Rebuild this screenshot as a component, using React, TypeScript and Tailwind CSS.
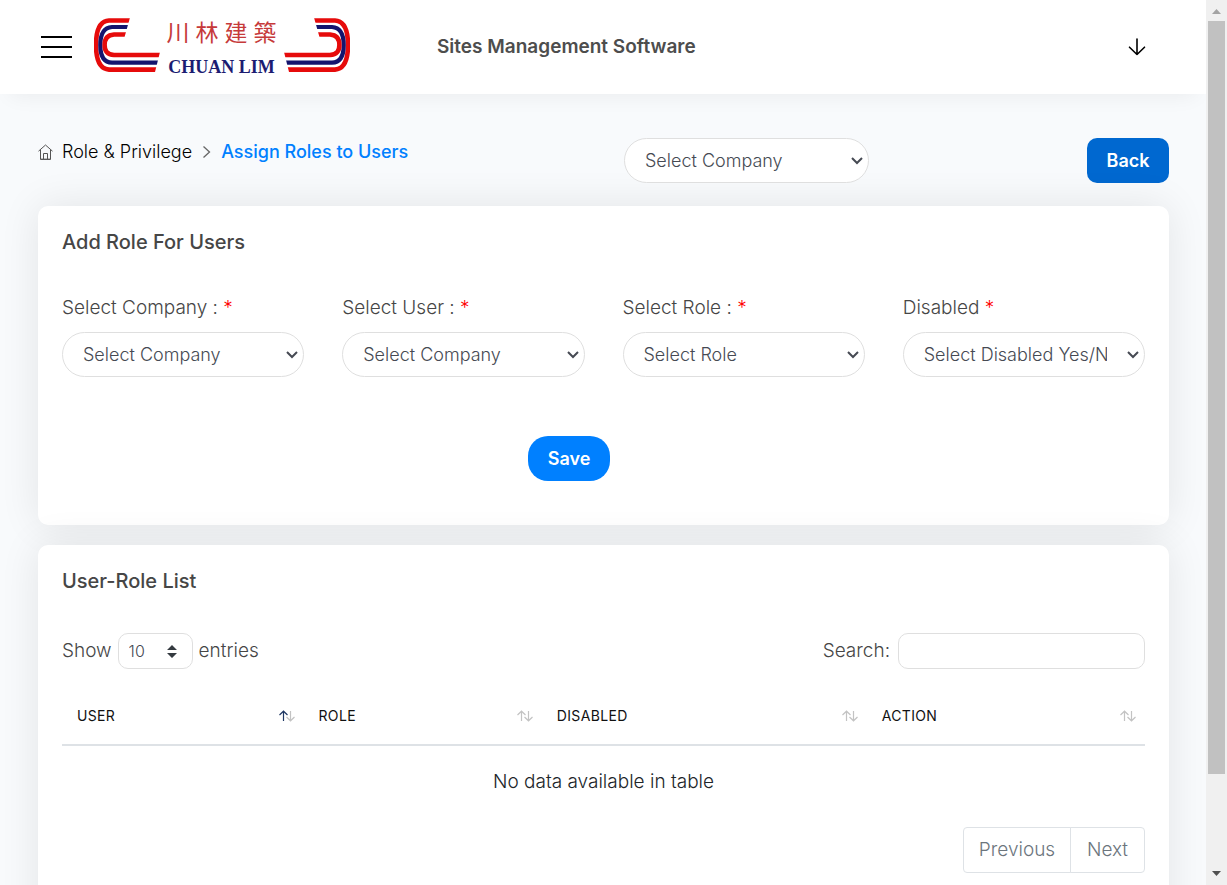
import { useState } from "react";

function LogoMark() {
  return (
    <g fill="none" strokeWidth="4.6">
      <path stroke="#e60b0b" d="M42 6.500H15C6 7 2 16 2 31S6 55 15 55.600H72" />
      <path stroke="#14146e" strokeWidth="4.200" d="M42 13H18C10 13.500 6.300 20 6.300 31S10 48.500 18 48.700H72" />
      <path stroke="#e60b0b" d="M42 20.500H20C13 21 10.600 25 10.600 31S13 40.500 20 41H72" />
    </g>
  );
}

function Logo() {
  return (
    <svg width="256" height="66" viewBox="0 0 256 66" role="img" aria-label="Chuan Lim">
      <defs>
        <clipPath id="ends">
          <path d="M-1 0H37L30 25L27 34H67L60.500 60H-1Z" />
        </clipPath>
      </defs>
      <g clipPath="url(#ends)">
        <LogoMark />
      </g>
      <g transform="translate(256 0) scale(-1 1)">
        <g clipPath="url(#ends)">
          <LogoMark />
        </g>
      </g>
      <g fill="#c63a3a" fontSize="23" fontFamily="'Noto Sans CJK TC', sans-serif" textAnchor="middle">
        <text x="84" y="27">川</text>
        <text x="113" y="27">林</text>
        <text x="142" y="27">建</text>
        <text x="171" y="27">築</text>
      </g>
      <text
        x="127.500"
        y="59"
        fill="#1c1c72"
        fontSize="18"
        fontWeight="700"
        fontFamily="'Liberation Serif', serif"
        textAnchor="middle"
      >
        CHUAN LIM
      </text>
    </svg>
  );
}

function PillSelect({ id, option, label }: { id: string; option: string; label?: string }) {
  return (
    <div className="relative">
      <select
        id={id}
        aria-label={label}
        className="block h-[45px] w-full appearance-none rounded-[23px] border border-[#dfdfdf] bg-white pr-[37px] pl-5 text-lg font-light text-[#464a53]"
      >
        <option>{option}</option>
      </select>
      <svg
        className="pointer-events-none absolute top-[19px] right-[6px]"
        width="12"
        height="8"
        viewBox="0 0 12 8"
        fill="none"
        stroke="#464a53"
        strokeWidth="2"
        aria-hidden="true"
      >
        <path d="M1 1L6 6L11 1" />
      </svg>
    </div>
  );
}

function Field({ id, label, option }: { id: string; label: string; option: string }) {
  return (
    <div className="min-w-0">
      <label htmlFor={id} className="block h-9 text-[19px] leading-6 font-light text-[#464646]">
        {label} <span className="text-[#ff0000]">*</span>
      </label>
      <PillSelect id={id} option={option} />
    </div>
  );
}

function SortIcon({ active }: { active?: boolean }) {
  return (
    <svg width="16" height="12" viewBox="0 0 16 12" fill="none" strokeWidth="1.200" aria-hidden="true">
      <path stroke="#c3c3c3" d="M11.500 1V10.500M7.500 7L11.500 10.800L15.500 7" />
      <path stroke={active ? "#1f3864" : "#c3c3c3"} d="M4.500 11V1.500M0.500 5L4.500 1.200L8.500 5" />
    </svg>
  );
}

const columns = [
  { name: "User", width: "w-[22.3%]" },
  { name: "Role", width: "w-[22%]" },
  { name: "Disabled", width: "w-[30%]" },
  { name: "Action", width: "w-[25.7%]" },
];

export default function App() {
  const [query, setQuery] = useState("");
  return (
    <div className="flex h-screen overflow-hidden bg-[#f8fafc] font-['Inter',sans-serif] text-lg text-[#464646]">
      <div className="flex min-w-0 flex-1 flex-col overflow-hidden">
        <header className="z-10 flex h-[94px] shrink-0 items-center bg-white pr-[60px] pl-[41px] shadow-[0_12px_20px_-10px_rgba(0,0,0,0.06)]">
          <button type="button" aria-label="Menu" className="flex w-[31px] flex-col gap-2">
            <span className="h-[2px] bg-black" />
            <span className="h-[2px] bg-black" />
            <span className="h-[2px] bg-black" />
          </button>
          <a href="#" className="ml-[22px] shrink-0">
            <Logo />
          </a>
          <h1 className="ml-[87px] text-[19px] font-semibold text-[#4d4d4d]">Sites Management Software</h1>
          <button type="button" aria-label="Open" className="ml-auto">
            <svg width="18" height="18" viewBox="0 0 18 18" fill="none" stroke="#000" strokeWidth="1.600" strokeLinecap="round" strokeLinejoin="round">
              <path d="M9 1V16.500M1.500 9.200L9 16.500L16.500 9.200" />
            </svg>
          </button>
        </header>

        <main className="flex min-h-0 flex-1 flex-col px-[38px] pt-11 pr-[37px]">
          <div className="mb-[23px] flex items-start justify-between">
            <nav aria-label="Breadcrumb" className="flex h-7 w-[586px] items-center">
              <svg width="15" height="16" viewBox="0 0 15 16" fill="none" stroke="#555" strokeWidth="1">
                <path d="M0.500 7.200L7.500 1L14.500 7.200M2.500 6V15.300H12.500V6M5.500 15V9.500H9.500V15M2.500 15.300H12.500" />
              </svg>
              <a href="#" className="ml-[9px] text-black">
                <span className="font-light">Role &amp; Privilege</span>
              </a>
              <svg className="mx-[10px]" width="9" height="14" viewBox="0 0 9 14" fill="none" stroke="#666" strokeWidth="1.300">
                <path d="M1.500 1.500L7.500 7L1.500 12.500" />
              </svg>
              <span aria-current="page" className="font-medium text-[#0080ff]">
                Assign Roles to Users
              </span>
            </nav>
            <div className="mr-auto w-[245px]">
              <PillSelect id="filter" label="Company" option="Select Company" />
            </div>
            <button type="button" className="h-[45px] w-[82px] rounded-[10px] bg-[#0068d0] font-semibold text-white">
              Back
            </button>
          </div>

          <section className="mb-5 rounded-[10px] bg-white px-6 pt-6 pb-11 shadow-[0_0_40px_rgba(0,0,0,0.09)]">
            <h2 className="text-xl leading-6 font-medium">Add Role For Users</h2>
            <form onSubmit={(event) => event.preventDefault()}>
              <div className="mt-[42px] grid grid-cols-4 gap-[38px]">
                <Field id="company" label="Select Company :" option="Select Company" />
                <Field id="user" label="Select User :" option="Select Company" />
                <Field id="role" label="Select Role :" option="Select Role" />
                <Field id="disabled" label="Disabled" option="Select Disabled Yes/No" />
              </div>
              <div className="mt-[59px] flex justify-center pr-[69px]">
                <button type="submit" className="h-[45px] w-[82px] rounded-[20px] bg-[#0080ff] font-semibold text-white">
                  Save
                </button>
              </div>
            </form>
          </section>

          <section className="shrink-0 rounded-[10px] bg-white px-6 pt-6 pb-16 shadow-[0_0_40px_rgba(0,0,0,0.09)]">
            <h2 className="text-xl leading-6 font-medium">User-Role List</h2>
            <div className="mt-10 flex items-center justify-between text-[19px] font-light">
              <div className="flex items-center gap-[6px]">
                <label htmlFor="length">Show</label>
                <span className="relative">
                  <select
                    id="length"
                    className="block h-9 w-[75px] appearance-none rounded-[10px] border border-[#dfdfdf] bg-white pl-[10px] text-base text-[#464a53]"
                  >
                    <option>10</option>
                  </select>
                  <svg className="pointer-events-none absolute top-3 right-4" width="10" height="13" viewBox="0 0 10 13" fill="#343a40" aria-hidden="true">
                    <path d="M5 0L10 5H0ZM5 13L0 8H10Z" />
                  </svg>
                </span>
                <span>entries</span>
              </div>
              <div className="flex items-center gap-2">
                <label htmlFor="search">Search:</label>
                <input
                  id="search"
                  type="search"
                  value={query}
                  onChange={(event) => setQuery(event.target.value)}
                  className="h-9 w-[247px] rounded-[10px] border border-[#dfdfdf] bg-white px-3 text-base"
                />
              </div>
            </div>
            <table className="mt-[14px] w-full table-fixed border-collapse text-[#212529]">
              <thead>
                <tr className="h-[62px] border-b-2 border-[#dee2e6]">
                  {columns.map((column, index) => (
                    <th
                      key={column.name}
                      scope="col"
                      className={column.width + " pt-1 pr-[9px] pl-[15px] text-left text-sm font-normal tracking-wide text-[#111] uppercase"}
                    >
                      <span className="flex items-center justify-between">
                        {column.name}
                        <SortIcon active={index === 0} />
                      </span>
                    </th>
                  ))}
                </tr>
              </thead>
              <tbody>
                <tr className="h-[72px]">
                  <td colSpan={4} className="text-center text-[19px] font-light">
                    No data available in table
                  </td>
                </tr>
              </tbody>
            </table>
            <div className="mt-[10px] flex justify-end text-[19px] font-light text-[#6c757d]">
              <button type="button" className="h-[46px] w-[108px] rounded-l-sm border border-[#dee2e6]">
                Previous
              </button>
              <button type="button" className="-ml-px h-[46px] w-[75px] rounded-r-sm border border-[#dee2e6]">
                Next
              </button>
            </div>
          </section>
        </main>
      </div>

      <div aria-hidden="true" className="flex w-[21px] shrink-0 flex-col items-center bg-[#f0f0f0]">
        <svg width="21" height="21" viewBox="0 0 21 21" fill="#a3a3a3">
          <path d="M6 14L10.500 9L15 14Z" />
        </svg>
        <div className="w-[17px] flex-[753] bg-[#c1c1c1]" />
        <div className="flex-[90]" />
        <svg width="21" height="21" viewBox="0 0 21 21" fill="#505050">
          <path d="M6 7L10.500 12L15 7Z" />
        </svg>
      </div>
    </div>
  );
}
